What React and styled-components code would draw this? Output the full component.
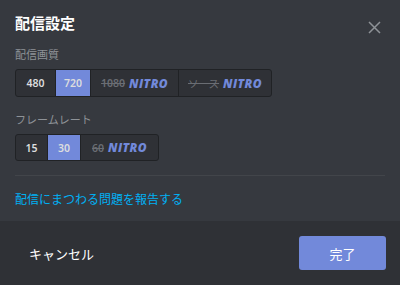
import React from 'react';
import styled, { createGlobalStyle } from 'styled-components';

const GlobalStyle = createGlobalStyle`
  html, body { margin: 0; padding: 0; background: #36393f; }
  body {
    font-family: "Noto Sans", "Noto Sans CJK JP", sans-serif;
    -webkit-font-smoothing: antialiased;
  }
`;

const Modal = styled.div`
  width: 400px;
  height: 285px;
  display: flex;
  flex-direction: column;
  background: #36393f;
  overflow: hidden;
`;

const Body = styled.div`
  flex: 1;
  padding: 0 15px;
  display: flex;
  flex-direction: column;
`;

const Header = styled.div`
  height: 43px;
  display: flex;
  align-items: center;
  justify-content: space-between;
`;

const Title = styled.h2`
  margin: 0;
  font-family: "Noto Sans CJK JP", sans-serif;
  font-size: 15px;
  font-weight: 700;
  color: #ffffff;
  line-height: 20px;
  margin-top: 2px;
`;

const Close = styled.button`
  border: 0;
  background: none;
  padding: 0;
  margin-right: 4px;
  margin-top: 12px;
  width: 13px;
  height: 13px;
  display: flex;
  color: #8e9297;
`;

const Label = styled.div`
  font-family: "Noto Sans CJK JP", sans-serif;
  font-size: 11px;
  line-height: 14px;
  color: #8e9297;
  margin-top: ${p => p.$top}px;
  margin-bottom: 8px;
`;

const Segments = styled.div`
  display: flex;
  align-self: flex-start;
  height: ${p => p.$h}px;
  box-sizing: border-box;
  background: #2f3136;
  border: 1px solid #202225;
  border-radius: 3px;
  overflow: hidden;
`;

const Segment = styled.div`
  display: flex;
  align-items: center;
  justify-content: center;
  gap: 4px;
  padding: 0 ${p => p.$pad}px;
  font-size: 10.5px;
  font-weight: 600;
  color: ${p => (p.$disabled ? '#6a6d73' : '#dcddde')};
  background: ${p => (p.$active ? '#7289da' : 'transparent')};
  border-left: ${p => (p.$first ? '0' : '1px solid #202225')};

  span {
    text-decoration: ${p => (p.$disabled ? 'line-through' : 'none')};
  }
`;

const Source = styled.span`
  font-family: "Noto Sans CJK JP", sans-serif;
  font-weight: 400;
`;

const Nitro = styled.em`
  font-family: "Open Sans", sans-serif;
  font-size: 12px;
  font-weight: 800;
  font-style: italic;
  letter-spacing: 0.4px;
  color: #7289da;
`;

const Divider = styled.hr`
  margin: 14px 0 0;
  border: 0;
  border-top: 1px solid #42454a;
`;

const ReportLink = styled.a`
  font-family: "Noto Sans CJK JP", sans-serif;
  font-size: 12px;
  line-height: 16px;
  color: #00b0f4;
  text-decoration: none;
  margin-top: 15px;
`;

const Footer = styled.div`
  height: 64px;
  flex-shrink: 0;
  background: #2f3136;
  display: flex;
  align-items: center;
  justify-content: space-between;
  padding: 0 14px 0 29px;
`;

const CancelButton = styled.button`
  border: 0;
  background: none;
  padding: 0;
  font-family: "Noto Sans CJK JP", sans-serif;
  font-size: 13px;
  color: #ffffff;
`;

const DoneButton = styled.button`
  width: 87px;
  height: 34px;
  border: 0;
  border-radius: 3px;
  background: #7289da;
  color: #ffffff;
  font-family: "Noto Sans CJK JP", sans-serif;
  font-size: 13px;
`;

const CloseIcon = () => (
  <svg width="13" height="13" viewBox="0 0 13 13">
    <path d="M1 1L12 12M12 1L1 12" stroke="currentColor" strokeWidth="1.5" />
  </svg>
);

export default function App() {
  return (
    <Modal>
      <GlobalStyle />
      <Body>
        <Header>
          <Title>配信設定</Title>
          <Close><CloseIcon /></Close>
        </Header>
        <Label $top={4}>配信画質</Label>
        <Segments $h={28}>
          <Segment $first $pad={10.5}>480</Segment>
          <Segment $active $pad={8}>720</Segment>
          <Segment $disabled $pad={10}><span>1080</span><Nitro>NITRO</Nitro></Segment>
          <Segment $disabled $pad={9}><span><Source>ソース</Source></span><Nitro>NITRO</Nitro></Segment>
        </Segments>
        <Label $top={15}>フレームレート</Label>
        <Segments $h={27}>
          <Segment $first $pad={9.5}>15</Segment>
          <Segment $active $pad={10}>30</Segment>
          <Segment $disabled $pad={11}><span>60</span><Nitro>NITRO</Nitro></Segment>
        </Segments>
        <Divider />
        <ReportLink href="#">配信にまつわる問題を報告する</ReportLink>
      </Body>
      <Footer>
        <CancelButton>キャンセル</CancelButton>
        <DoneButton>完了</DoneButton>
      </Footer>
    </Modal>
  );
}
